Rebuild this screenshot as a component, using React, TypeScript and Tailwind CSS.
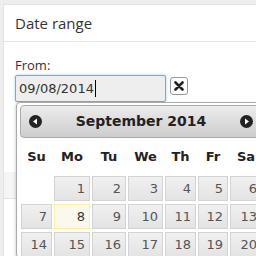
import React from 'react';

const days = ['Su', 'Mo', 'Tu', 'We', 'Th', 'Fr', 'Sa'];

const weeks: (number | null)[][] = [
  [null, 1, 2, 3, 4, 5, 6],
  [7, 8, 9, 10, 11, 12, 13],
  [14, 15, 16, 17, 18, 19, 20],
];

function ArrowIcon({ dir }: { dir: 'left' | 'right' }) {
  return (
    <svg width="13" height="13" viewBox="0 0 13 13">
      <circle cx="6.5" cy="6.5" r="6.5" fill="#222" />
      {dir === 'left' ? (
        <path d="M4 6.5 L8 3.5 L8 9.5 Z" fill="#fff" />
      ) : (
        <path d="M9 6.5 L5 3.5 L5 9.5 Z" fill="#fff" />
      )}
    </svg>
  );
}

function DatePicker() {
  return (
    <div className="absolute left-[1px] top-[27px] w-[250px] bg-white border border-[#aaa] rounded-[4px] pt-[2px] pl-[3px] pr-[3px] shadow-[-1px_1px_3px_rgba(0,0,0,0.15)] font-['DejaVu_Sans',sans-serif]">
      <div className="h-[33px] flex items-center justify-between border border-[#aaa] rounded-[4px] bg-gradient-to-b from-[#ececec] to-[#cdcdcd] pl-[8px] pr-[8px]">
        <ArrowIcon dir="left" />
        <span className="text-[14px] font-bold text-[#222]">September 2014</span>
        <ArrowIcon dir="right" />
      </div>
      <div className="pl-[1px] grid grid-cols-[31px_36px_34px_35px_31px_30px_32px] gap-x-[2px] gap-y-[3px]">
        {days.map((d) => (
          <div key={d} className="h-[35px] flex items-center justify-center text-[13px] font-bold text-[#222] pt-[3px]">
            {d}
          </div>
        ))}
        {weeks.flat().map((n, i) =>
          n === null ? (
            <div key={i} />
          ) : (
            <div
              key={i}
              className={
                n === 8
                  ? 'h-[25px] border border-[#fcefa1] bg-[#fbf9ee] text-[#363636] text-[13px] flex items-center justify-end pr-[4px]'
                  : 'h-[25px] border border-[#d3d3d3] bg-gradient-to-b from-[#f0f0f0] to-[#e4e4e4] text-[#555] text-[13px] flex items-center justify-end pr-[4px]'
              }
            >
              {n}
            </div>
          )
        )}
      </div>
    </div>
  );
}

export default function App() {
  return (
    <div className="w-[256px] h-[256px] overflow-hidden bg-[#eeeeee] pt-[4px] pl-[3px] font-['Open_Sans',sans-serif]">
      <div className="bg-white h-[300px] border-l border-t border-[#e2e2e2]">
        <div className="h-[37px] border-b border-[#e5e5e5] flex items-center pl-[11px]">
          <h2 className="text-[15px] text-[#333] leading-none">Date range</h2>
        </div>
        <div className="pl-[11px] pt-[14px]">
          <label className="block text-[13px] text-[#333] leading-[18px] mb-[1px]">From:</label>
          <div className="relative flex items-start gap-[4px]">
            <div className="w-[151px] h-[27px] border border-[#66afe9] rounded-[2px] bg-[#eeeeee] shadow-[0_0_3px_rgba(102,175,233,0.6)] flex items-center pl-[3px] text-[13px] text-[#333] font-['DejaVu_Sans',sans-serif]">
              09/08/2014
              <span className="w-px h-[17px] bg-black ml-px" />
            </div>
            <button className="mt-[2px] w-[18px] h-[18px] border border-[#999] rounded-[3px] bg-white flex items-center justify-center">
              <svg width="10" height="10" viewBox="0 0 10 10">
                <path d="M1.5 1.5 L8.5 8.5 M8.5 1.5 L1.5 8.5" stroke="#222" strokeWidth="2.6" strokeLinecap="round" />
              </svg>
            </button>
            <DatePicker />
          </div>
          <div className="mt-[70px] -ml-[11px] h-[27px] bg-[#f5f5f5] border-b border-[#e2e2e2]" />
        </div>
      </div>
    </div>
  );
}
